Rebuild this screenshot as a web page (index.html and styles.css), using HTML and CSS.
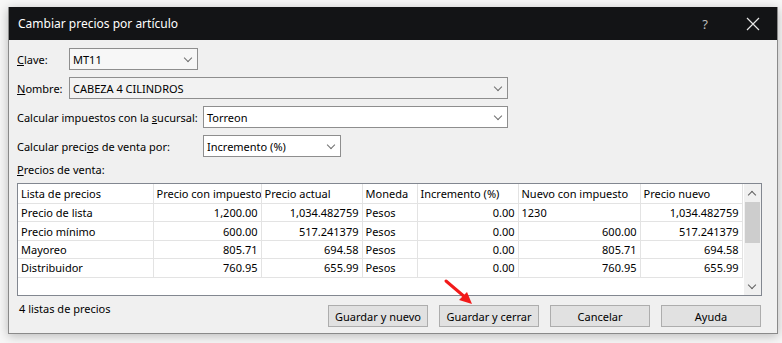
FILE: index.html
```html
<!DOCTYPE html>
<html lang="es">
<head>
    <meta charset="UTF-8">
    <meta name="viewport" content="width=device-width, initial-scale=1.0">
    <title>Cambiar precios por artículo</title>
    <link rel="stylesheet" href="styles.css">
</head>
<body>
    <div class="ventana">
        <div class="titulo">
            <span class="titulo-texto">Cambiar precios por artículo</span>
            <span class="ayuda-icono">?</span>
            <span class="cerrar">
                <svg width="14" height="14" viewBox="0 0 14 14"><path d="M1 1 L13 13 M13 1 L1 13" stroke="#e6e6e6" stroke-width="1.2" fill="none"/></svg>
            </span>
        </div>
        <div class="contenido">
            <div class="fila">
                <label class="etiqueta corta"><u>C</u>lave:</label>
                <div class="combo combo-clave"><span>MT11</span><span class="flecha"></span></div>
            </div>
            <div class="fila">
                <label class="etiqueta corta"><u>N</u>ombre:</label>
                <div class="combo combo-nombre"><span>CABEZA 4 CILINDROS</span><span class="flecha"></span></div>
            </div>
            <div class="fila">
                <label class="etiqueta larga">Calcular impuestos con la <u>s</u>ucursal:</label>
                <div class="combo combo-sucursal"><span>Torreon</span><span class="flecha"></span></div>
            </div>
            <div class="fila">
                <label class="etiqueta larga">Calcular preci<u>o</u>s de venta por:</label>
                <div class="combo combo-calculo"><span>Incremento (%)</span><span class="flecha"></span></div>
            </div>
            <div class="seccion"><u>P</u>recios de venta:</div>
            <div class="rejilla">
                <table class="tabla">
                    <colgroup>
                        <col style="width: 135px">
                        <col style="width: 108px">
                        <col style="width: 101px">
                        <col style="width: 55px">
                        <col style="width: 101px">
                        <col style="width: 122px">
                        <col style="width: 102px">
                    </colgroup>
                    <thead>
                        <tr>
                            <th>Lista de precios</th>
                            <th>Precio con impuesto</th>
                            <th>Precio actual</th>
                            <th>Moneda</th>
                            <th>Incremento (%)</th>
                            <th>Nuevo con impuesto</th>
                            <th>Precio nuevo</th>
                        </tr>
                    </thead>
                    <tbody>
                        <tr>
                            <td>Precio de lista</td>
                            <td class="num">1,200.00</td>
                            <td class="num">1,034.482759</td>
                            <td>Pesos</td>
                            <td class="num">0.00</td>
                            <td class="edicion">1230</td>
                            <td class="num">1,034.482759</td>
                        </tr>
                        <tr>
                            <td>Precio mínimo</td>
                            <td class="num">600.00</td>
                            <td class="num">517.241379</td>
                            <td>Pesos</td>
                            <td class="num">0.00</td>
                            <td class="num">600.00</td>
                            <td class="num">517.241379</td>
                        </tr>
                        <tr>
                            <td>Mayoreo</td>
                            <td class="num">805.71</td>
                            <td class="num">694.58</td>
                            <td>Pesos</td>
                            <td class="num">0.00</td>
                            <td class="num">805.71</td>
                            <td class="num">694.58</td>
                        </tr>
                        <tr>
                            <td>Distribuidor</td>
                            <td class="num">760.95</td>
                            <td class="num">655.99</td>
                            <td>Pesos</td>
                            <td class="num">0.00</td>
                            <td class="num">760.95</td>
                            <td class="num">655.99</td>
                        </tr>
                    </tbody>
                </table>
                <div class="scroll">
                    <div class="scroll-boton arriba"></div>
                    <div class="scroll-pista"><div class="scroll-barra"></div></div>
                    <div class="scroll-boton abajo"></div>
                </div>
            </div>
            <div class="pie">
                <span class="contador">4 listas de precios</span>
                <div class="botones">
                    <button>Guardar y nuevo</button>
                    <button>Guardar y cerrar</button>
                    <button>Cancelar</button>
                    <button>Ayuda</button>
                </div>
            </div>
        </div>
    </div>

    <svg class="flecha-roja" width="40" height="36" viewBox="0 0 40 36">
        <path d="M4 3 L24 20" stroke="#f21a1a" stroke-width="3" stroke-linecap="round" fill="none"/>
        <path d="M30 26 L17 22 L25 14 Z" fill="#f21a1a"/>
    </svg>
</body>
</html>
```

FILE: styles.css
```css
body {
    margin: 0;
    background-color: #f7f7f7;
    font-family: "Noto Sans", "Open Sans", sans-serif;
    font-size: 11px;
    color: #000000;
    position: relative;
    height: 343px;
    overflow: hidden;
}
.ventana {
    margin: 7px 0 0 8px;
    width: 768px;
    height: 326px;
    background-color: #f0f0f0;
    border: 1px solid #8a8a8a;
    border-top: none;
    box-shadow: 0 2px 10px rgba(0, 0, 0, 0.25);
}
.titulo {
    height: 33px;
    background-color: #131416;
    color: #ffffff;
    display: flex;
    align-items: center;
    padding-left: 9px;
}
.titulo-texto {
    font-size: 12px;
    flex: 1;
}
.ayuda-icono {
    color: #bdbdbd;
    font-size: 13px;
    width: 20px;
    text-align: center;
    margin-right: 31px;
}
.cerrar {
    width: 14px;
    height: 14px;
    margin-right: 17px;
    display: flex;
}
.contenido {
    padding: 8px 14px 0 8px;
}
.fila {
    display: flex;
    align-items: center;
    height: 22px;
    margin-bottom: 7px;
}
.etiqueta {
    flex: none;
}
.corta {
    width: 52px;
}
.larga {
    width: 186px;
}
.combo {
    border: 1px solid #8e8e8e;
    background-color: #ffffff;
    display: flex;
    align-items: center;
    justify-content: space-between;
    padding: 0 6px 0 3px;
    box-sizing: border-box;
    height: 22px;
}
.combo-clave {
    width: 129px;
    background-color: #f7f7f7;
}
.combo-nombre {
    width: 439px;
    background-color: #f2f2f2;
}
.combo-sucursal {
    width: 305px;
}
.combo-calculo {
    width: 138px;
}
.flecha {
    width: 5px;
    height: 5px;
    border-right: 1px solid #6f6f6f;
    border-bottom: 1px solid #6f6f6f;
    transform: rotate(45deg);
    margin-top: -3px;
}
.seccion {
    margin-top: -1px;
    height: 14px;
    line-height: 14px;
    margin-bottom: 6px;
}
.rejilla {
    display: flex;
    width: 745px;
    height: 113px;
    border: 1px solid #828790;
    background-color: #ffffff;
    box-sizing: border-box;
}
.tabla {
    border-collapse: collapse;
    table-layout: fixed;
    width: 724px;
    align-self: flex-start;
}
.tabla th,
.tabla td {
    border-right: 1px solid #e3e3e3;
    border-bottom: 1px solid #e3e3e3;
    height: 17.4px;
    padding: 0 3px;
    white-space: nowrap;
    overflow: hidden;
    font-weight: normal;
    text-align: left;
}
.tabla th {
    height: 19px;
}
.tabla .num {
    text-align: right;
}
.scroll {
    width: 18px;
    margin-left: 1px;
    display: flex;
    flex-direction: column;
    background-color: #f0f0f0;
}
.scroll-boton {
    height: 18px;
    display: flex;
    justify-content: center;
    align-items: center;
}
.scroll-boton::after {
    content: "";
    width: 5px;
    height: 5px;
    border-left: 1.5px solid #606060;
    border-top: 1.5px solid #606060;
}
.arriba::after {
    transform: rotate(45deg);
    margin-top: 3px;
}
.abajo::after {
    transform: rotate(225deg);
    margin-top: -3px;
}
.scroll-pista {
    flex: 1;
    padding: 0 1px;
}
.scroll-barra {
    height: 41px;
    background-color: #cdcdcd;
}
.pie {
    display: flex;
    justify-content: space-between;
    align-items: flex-start;
    margin-top: 6px;
    width: 745px;
}
.contador {
    padding-left: 2px;
    margin-top: -1px;
}
.botones {
    display: flex;
    gap: 11px;
    margin-top: 3px;
    margin-right: 1px;
}
button {
    width: 100px;
    height: 22px;
    font-family: "Noto Sans", "Open Sans", sans-serif;
    font-size: 11px;
    background-color: #e1e1e1;
    border: 1px solid #adadad;
    padding: 0;
    color: #000000;
}
.flecha-roja {
    position: absolute;
    left: 442px;
    top: 278px;
}
```
